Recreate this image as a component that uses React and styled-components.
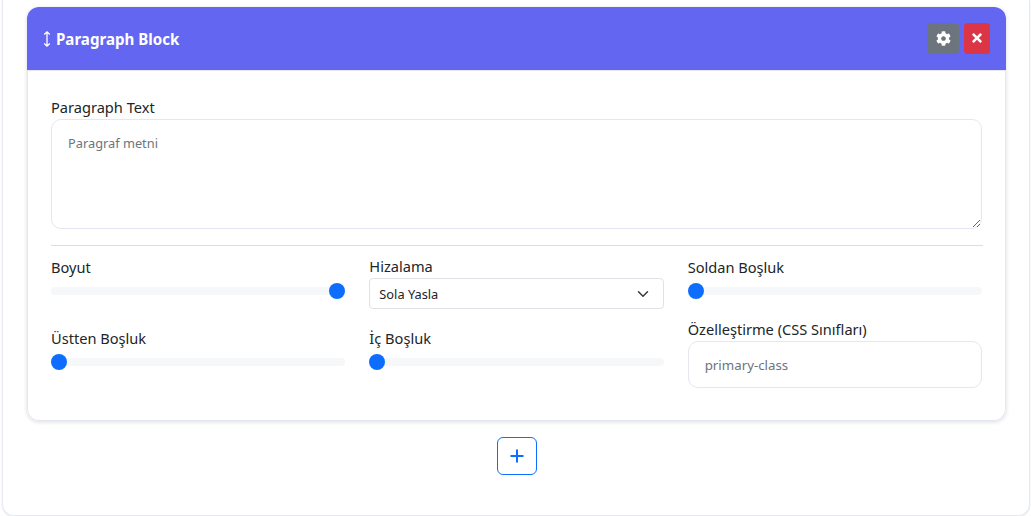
import { createGlobalStyle, styled } from "styled-components";
import { FaCog, FaTimes } from "react-icons/fa";

const GlobalStyle = createGlobalStyle`
  html, body {
    margin: 0;
    padding: 0;
    background: #fff;
  }
  body {
    font-family: "Noto Sans", "Open Sans", sans-serif;
    color: #212529;
    overflow: hidden;
  }
  * {
    box-sizing: border-box;
  }
`;

function App() {
  return (
    <>
      <GlobalStyle />
      <Panel>
        <Card>
          <CardHeader>
            <Title>
              <svg width="8" height="16" viewBox="0 0 8 16" fill="none">
                <path d="M4 1v14M1.2 3.6L4 1l2.8 2.6M1.2 12.4L4 15l2.8-2.6" stroke="#fff" strokeWidth="1.3" />
              </svg>
              Paragraph Block
            </Title>
            <HeaderActions>
              <IconButton $bg="#6c757d" $width={32}>
                <FaCog size={15} />
              </IconButton>
              <IconButton $bg="#dc3545" $width={26}>
                <FaTimes size={14} />
              </IconButton>
            </HeaderActions>
          </CardHeader>
          <CardBody>
            <Label>Paragraph Text</Label>
            <TextArea placeholder="Paragraf metni" />
            <Divider />
            <FieldGrid>
              <SliderField $top={1}>
                <SliderLabel>Boyut</SliderLabel>
                <Slider type="range" min="0" max="100" defaultValue="100" />
              </SliderField>
              <div>
                <Label>Hizalama</Label>
                <SelectBox>
                  Sola Yasla
                  <svg width="12" height="12" viewBox="0 0 16 16" fill="none">
                    <path d="M2 5l6 6 6-6" stroke="#343a40" strokeWidth="2" strokeLinecap="round" strokeLinejoin="round" />
                  </svg>
                </SelectBox>
              </div>
              <SliderField $top={1}>
                <SliderLabel>Soldan Boşluk</SliderLabel>
                <Slider type="range" min="0" max="100" defaultValue="0" />
              </SliderField>
              <SliderField $top={9}>
                <SliderLabel>Üstten Boşluk</SliderLabel>
                <Slider type="range" min="0" max="100" defaultValue="0" />
              </SliderField>
              <SliderField $top={9}>
                <SliderLabel>İç Boşluk</SliderLabel>
                <Slider type="range" min="0" max="100" defaultValue="0" />
              </SliderField>
              <div>
                <Label>Özelleştirme (CSS Sınıfları)</Label>
                <TextInput placeholder="primary-class" />
              </div>
            </FieldGrid>
          </CardBody>
        </Card>
        <AddRow>
          <AddButton>
            <svg width="16" height="16" viewBox="0 0 16 16" fill="none">
              <path d="M8 1.5v13M1.5 8h13" stroke="#0d6efd" strokeWidth="2" />
            </svg>
          </AddButton>
        </AddRow>
      </Panel>
    </>
  );
}

const Panel = styled.div`
  width: 1028px;
  height: 516px;
  margin-left: 2px;
  padding: 7px 0 0 24px;
  background: #fff;
  border: 1px solid #e6eaf0;
  border-top: none;
  border-radius: 0 0 12px 12px;
  box-shadow: 0 1px 2px rgba(120, 140, 170, 0.18);
`;

const Card = styled.div`
  width: 979px;
  background: #fff;
  border-radius: 12px;
  box-shadow: 0 1px 4px rgba(0, 0, 0, 0.14);
  overflow: hidden;
`;

const CardHeader = styled.div`
  height: 64px;
  padding: 0 16px 1px;
  display: flex;
  align-items: center;
  justify-content: space-between;
  background: #6366f1;
  color: #fff;
  border-bottom: 1px solid #e6e9f5;
`;

const Title = styled.div`
  display: flex;
  align-items: center;
  gap: 5px;
  padding-top: 2px;
  font-size: 15.1px;
  font-weight: 700;
`;

const HeaderActions = styled.div`
  display: flex;
  gap: 5px;
`;

const IconButton = styled.button`
  width: ${(p) => p.$width}px;
  height: 31px;
  padding: 0;
  display: flex;
  align-items: center;
  justify-content: center;
  border: none;
  border-radius: 4px;
  background: ${(p) => p.$bg};
  color: #fff;
`;

const CardBody = styled.div`
  padding: 24px 23px 32px 23px;
  border: 1px solid #e3e6f3;
  border-top: none;
  border-radius: 0 0 12px 12px;
`;

const Label = styled.label`
  display: block;
  height: 24px;
  font-size: 14.6px;
  line-height: 24px;
`;

const SliderLabel = styled(Label)`
  margin-bottom: 4px;
`;

const TextArea = styled.textarea`
  display: block;
  width: 931px;
  height: 110px;
  padding: 14px 16px;
  font-family: inherit;
  font-size: 12.8px;
  line-height: 1.5;
  background: #fff;
  border: 1px solid #e4e7f2;
  border-radius: 10px;
  outline: none;

  &::placeholder {
    color: #6c757d;
    opacity: 1;
  }
`;

const Divider = styled.hr`
  width: 932px;
  margin: 16px 0 8px;
  border: none;
  border-top: 1px solid #dedede;
`;

const FieldGrid = styled.div`
  width: 931px;
  display: grid;
  grid-template-columns: repeat(3, 1fr);
  column-gap: 24px;
  row-gap: 8px;
`;

const SliderField = styled.div`
  min-width: 0;
  margin-top: ${(p) => p.$top}px;
`;

const Slider = styled.input`
  display: block;
  width: 100%;
  height: 16px;
  margin: 0;
  appearance: none;
  background: transparent;

  &::-webkit-slider-runnable-track {
    height: 8px;
    background: #f6f7f9;
    border-radius: 8px;
  }

  &::-webkit-slider-thumb {
    appearance: none;
    width: 16px;
    height: 16px;
    margin-top: -4px;
    background: #0d6efd;
    border: none;
    border-radius: 50%;
  }
`;

const SelectBox = styled.div`
  height: 31px;
  padding: 0 14px 0 9px;
  display: flex;
  align-items: center;
  justify-content: space-between;
  font-size: 12.8px;
  background: #fff;
  border: 1px solid #dee2e6;
  border-radius: 4px;
`;

const TextInput = styled.input`
  display: block;
  width: 100%;
  height: 47px;
  padding: 0 16px;
  font-family: inherit;
  font-size: 13.3px;
  background: #fff;
  border: 1px solid #e4e7f2;
  border-radius: 10px;
  outline: none;

  &::placeholder {
    color: #6c757d;
    opacity: 1;
  }
`;

const AddRow = styled.div`
  width: 979px;
  margin-top: 16px;
  display: flex;
  justify-content: center;
`;

const AddButton = styled.button`
  width: 40px;
  height: 38px;
  padding: 0;
  display: flex;
  align-items: center;
  justify-content: center;
  background: #fff;
  border: 1px solid #0d6efd;
  border-radius: 6px;
`;

export default App;
